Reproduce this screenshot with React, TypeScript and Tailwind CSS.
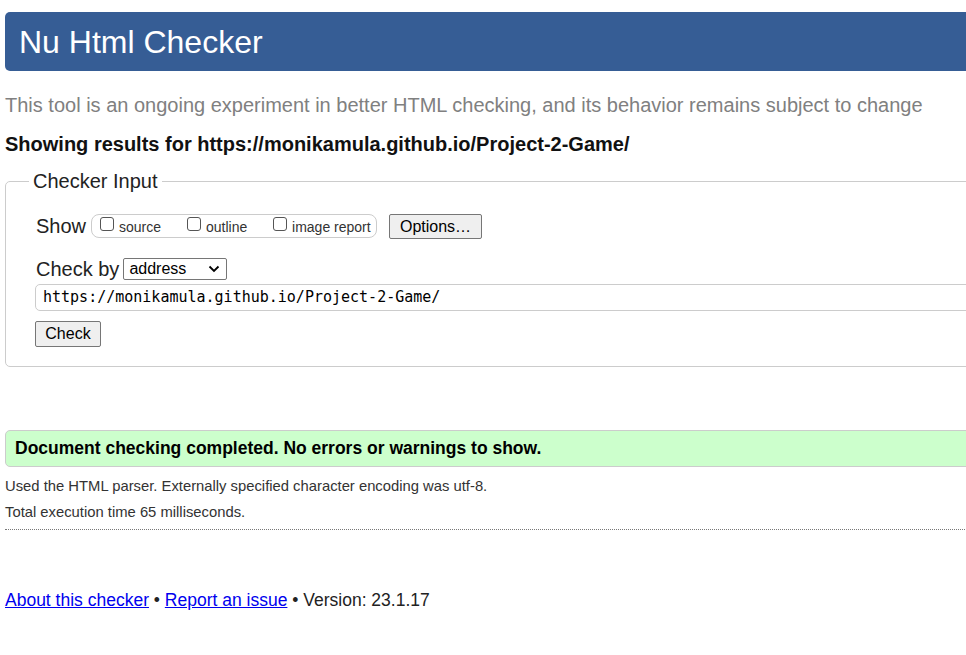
import React from "react";

export default function App() {
  return (
    <div className="w-[966px] h-[655px] overflow-hidden bg-white text-[#222]" style={{ fontFamily: '"Liberation Sans", Arial, sans-serif' }}>
      <div className="w-[1000px] pl-[5px] pt-[12px]">
        <h1 className="h-[59px] bg-[#365d95] rounded-l-[5px] text-white text-[32px] leading-[60px] pl-[14px]">
          Nu Html Checker
        </h1>
        <p className="mt-[22px] text-[20px] leading-[24px] text-[#808080]">
          This tool is an ongoing experiment in better HTML checking, and its behavior remains subject to change
        </p>
        <p className="mt-[15px] text-[20px] leading-[24px] font-bold text-[#111]">
          Showing results for https://monikamula.github.io/Project-2-Game/
        </p>
        <fieldset className="mt-[14px] border border-[#ccc] rounded-[5px] pl-[30px] pb-[19px] pt-[4px]">
          <legend className="-ml-[7px] px-[4px] text-[20px] leading-[22px] text-[#222]">Checker Input</legend>
          <div className="flex items-center h-[28px] mt-[16px]">
            <span className="text-[20px] text-[#222]">Show</span>
            <div className="ml-[5px] flex items-center h-[24px] w-[286px] border border-[#ccc] rounded-[8px] pl-[8px] text-[14px] text-[#333]">
              <label className="flex items-center w-[87px] pt-[2px]">
                <span className="w-[14px] h-[14px] border border-[#555] rounded-[3px] bg-white mr-[5px] -mt-[6px]" />
                source
              </label>
              <label className="flex items-center w-[86px] pt-[2px]">
                <span className="w-[14px] h-[14px] border border-[#555] rounded-[3px] bg-white mr-[5px] -mt-[6px]" />
                outline
              </label>
              <label className="flex items-center pt-[2px]">
                <span className="w-[14px] h-[14px] border border-[#555] rounded-[3px] bg-white mr-[5px] -mt-[6px]" />
                image report
              </label>
            </div>
            <button className="ml-[12px] h-[25px] w-[93px] border border-[#767676] rounded-[2px] bg-[#efefef] text-[16px] text-black">
              Options…
            </button>
          </div>
          <div className="flex items-center mt-[18px] h-[22px]">
            <span className="text-[20px] text-[#222]">Check by</span>
            <div className="ml-[4px] h-[22px] w-[104px] border border-[#767676] rounded-[2px] flex items-center justify-between pl-[5px] pr-[6px] text-[16px] text-black">
              <span>address</span>
              <svg width="12" height="8" viewBox="0 0 12 8"><path d="M1.5 1.5 L6 6 L10.5 1.5" fill="none" stroke="#000" strokeWidth="1.8" /></svg>
            </div>
          </div>
          <div className="mt-[4px] -ml-[1px] h-[27px] border border-[#ccc] rounded-[5px] flex items-center pl-[7px] text-[15px] text-black" style={{ fontFamily: '"DejaVu Sans Mono", monospace' }}>
            https://monikamula.github.io/Project-2-Game/
          </div>
          <button className="mt-[10px] -ml-[1px] h-[26px] w-[66px] border border-[#767676] rounded-[2px] bg-[#efefef] text-[16px] text-black flex items-center justify-center">
            Check
          </button>
        </fieldset>
        <div className="mt-[63px] h-[37px] bg-[#ccffcc] border border-[#ccc] rounded-l-[5px] flex items-center pl-[9px] text-[17.5px] font-bold text-black">
          Document checking completed. No errors or warnings to show.
        </div>
        <p className="mt-[11px] text-[14.8px] leading-[17px] text-[#333]">
          Used the HTML parser. Externally specified character encoding was utf-8.
        </p>
        <p className="mt-[9px] text-[14.8px] leading-[17px] text-[#333]">Total execution time 65 milliseconds.</p>
        <div className="mt-[8px] w-[960px] border-t border-dotted border-[#777]" />
        <p className="mt-[59px] text-[17.5px] leading-[22px] text-[#222]">
          <a href="#" className="text-[#0000ee] underline">About this checker</a>
          {" • "}
          <a href="#" className="text-[#0000ee] underline">Report an issue</a>
          {" • Version: 23.1.17"}
        </p>
      </div>
    </div>
  );
}
